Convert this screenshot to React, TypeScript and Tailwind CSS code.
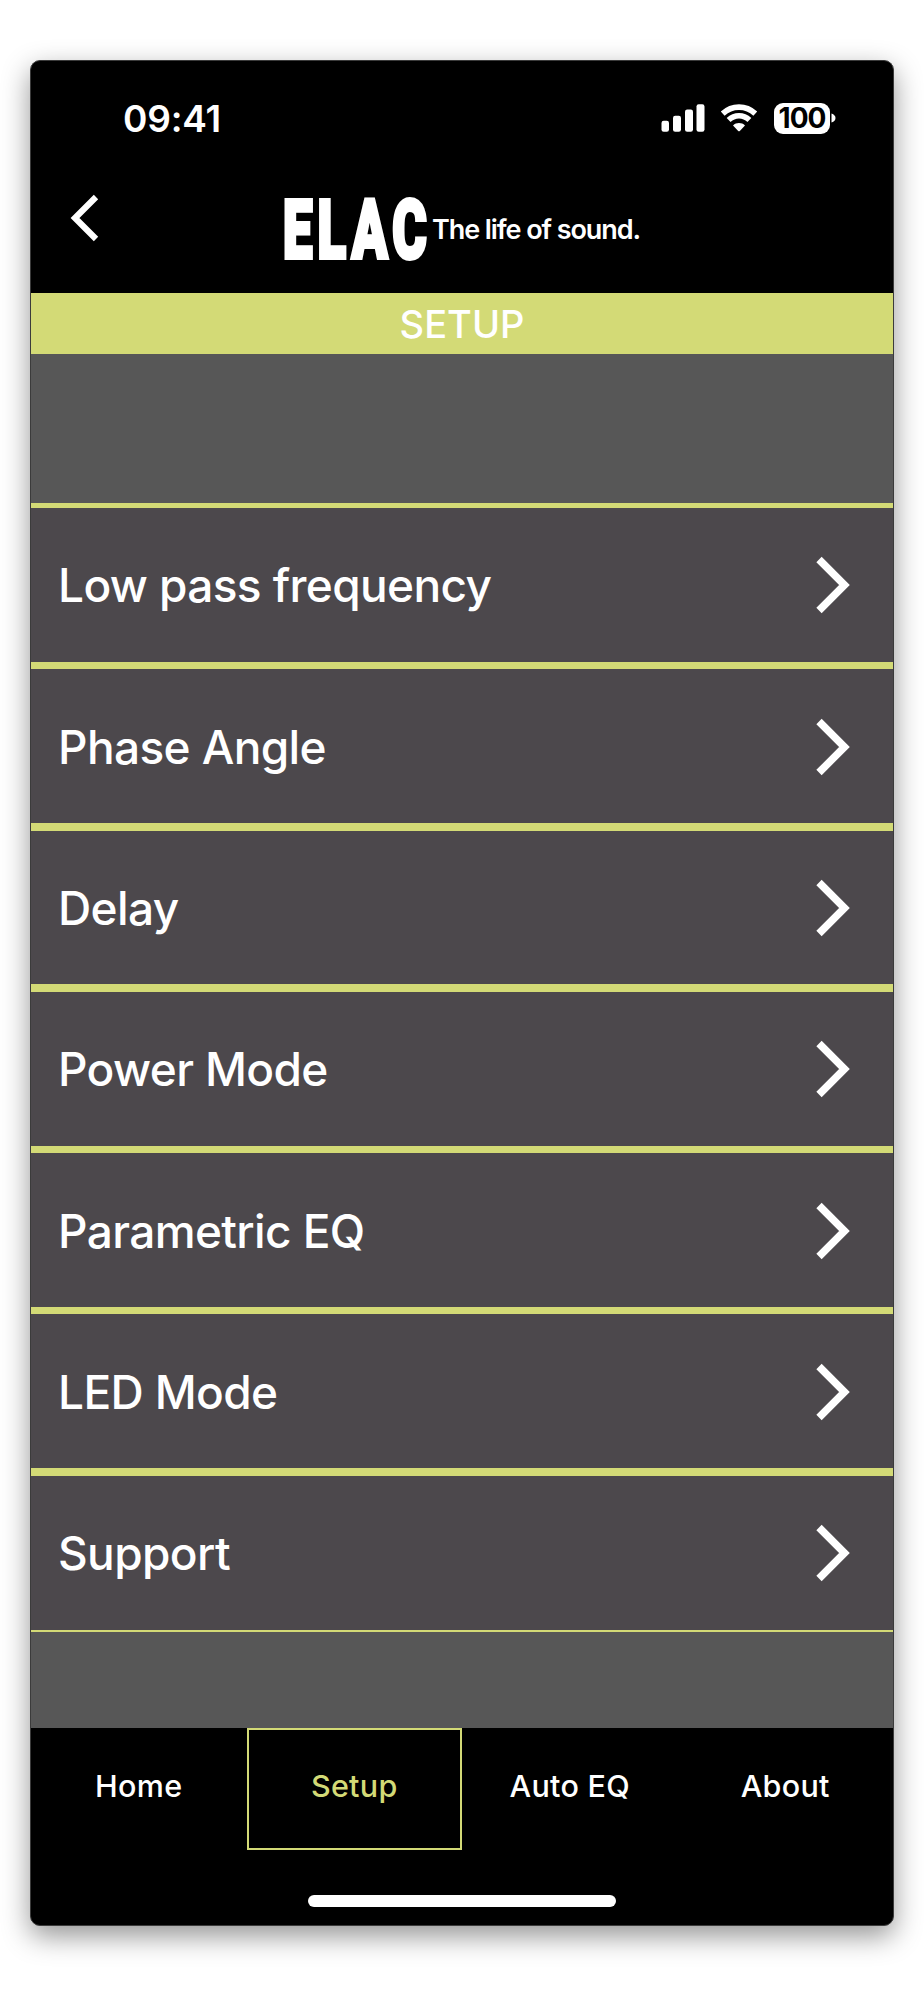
const menuItems = [
  "Low pass frequency",
  "Phase Angle",
  "Delay",
  "Power Mode",
  "Parametric EQ",
  "LED Mode",
  "Support",
];

const tabs = ["Home", "Setup", "Auto EQ", "About"];

function StatusBar() {
  return (
    <div className="flex h-[114px] shrink-0 items-center justify-between pr-[57px] pl-[92px]">
      <span className="text-[37px] leading-none font-semibold tracking-[-0.2px]">09:41</span>
      <div className="flex items-center">
        <svg width="44" height="28" viewBox="0 0 44 28" fill="white">
          <rect x="0.5" y="16.7" width="7.5" height="11" rx="2.2" />
          <rect x="12" y="11.7" width="8" height="16" rx="2.2" />
          <rect x="24" y="5.5" width="8" height="22.2" rx="2.2" />
          <rect x="35.5" y="0.3" width="8" height="27.4" rx="2.2" />
        </svg>
        <svg className="ml-[15px]" width="38" height="28" viewBox="0 0 38 28">
          <g fill="none" stroke="white" strokeWidth="5.6">
            <path d="M2.7 9.6 C12 0.9 26 0.9 35.3 9.6" />
            <path d="M8.6 16 C14.6 10.3 23.4 10.3 29.4 16" />
          </g>
          <path d="M13 21.5 C16.4 18.3 21.6 18.3 25 21.5 L19.8 26.9 Q19 27.6 18.2 26.9 Z" fill="white" />
        </svg>
        <div className="ml-[16px] flex h-[31px] w-[56px] items-center justify-center rounded-[9px] bg-white text-[28px] leading-none font-bold tracking-[-1px] text-black">
          100
        </div>
        <svg className="ml-[1px]" width="5" height="10" viewBox="0 0 5 10" fill="white">
          <path d="M0.5 0.5 Q4.5 2 4.5 5 Q4.5 8 0.5 9.5 Z" />
        </svg>
      </div>
    </div>
  );
}

function Header() {
  return (
    <header className="flex h-[118px] shrink-0 items-start">
      <button className="mt-[18px] ml-[38px]" aria-label="Back">
        <svg width="32" height="50" viewBox="0 0 32 50" fill="none" stroke="white" strokeWidth="6.2">
          <path d="M27 4 L6 25 L27 46" />
        </svg>
      </button>
      <div className="mt-[3px] ml-[182px] flex items-center">
        <svg
          className="overflow-visible"
          width="147"
          height="100"
          viewBox="0 0 229 100"
          preserveAspectRatio="none"
          fill="white"
          stroke="white"
          strokeWidth="4"
        >
          <text x="0" y="80" className="font-['Roboto'] text-[82px] font-black tracking-[8px]">
            ELAC
          </text>
        </svg>
        <span className="mt-[3px] ml-[2px] text-[27px] leading-none font-semibold tracking-[-1.08px] whitespace-nowrap">
          The life of sound.
        </span>
      </div>
    </header>
  );
}

function MenuRow({ label }: { label: string }) {
  return (
    <button className="flex h-[153.8px] w-full items-center justify-between bg-[#4c484c] pt-[1px] pr-[42px] pl-[27px] text-left">
      <span className="text-[46px] leading-none font-medium tracking-[-0.62px]">{label}</span>
      <svg width="36" height="58" viewBox="0 0 36 58" fill="none" stroke="white" strokeWidth="7.5">
        <path d="M4 3.5 L29.5 29 L4 54.5" />
      </svg>
    </button>
  );
}

export default function App() {
  return (
    <div className="h-[2000px] w-[924px] bg-white px-[30px] pt-[60px] font-['Inter',sans-serif] text-white">
      <div className="flex h-[1866px] w-[864px] flex-col overflow-hidden rounded-[10px] border border-[#3b3b3b] bg-black shadow-[0_10px_28px_rgba(0,0,0,0.42)]">
        <StatusBar />
        <Header />

        <div className="flex h-[61px] shrink-0 items-center justify-center bg-[#d3da76] text-[38px] leading-none font-medium">
          SETUP
        </div>

        <main className="h-[1374px] shrink-0 bg-[#575757] pt-[149px]">
          <div className="flex flex-col gap-[7.5px] bg-[#d3da76] pt-[5px] pb-[2px]">
            {menuItems.map((item) => (
              <MenuRow key={item} label={item} />
            ))}
          </div>
        </main>

        <nav className="grid h-[122px] shrink-0 grid-cols-4">
          {tabs.map((tab) => (
            <button
              key={tab}
              className={
                tab === "Setup"
                  ? "border-2 border-[#d3da76] pb-[6px] text-[30.5px] font-medium tracking-[0.3px] text-[#d3da76]"
                  : "border-2 border-transparent pb-[6px] text-[30.5px] font-medium tracking-[0.3px]"
              }
            >
              {tab}
            </button>
          ))}
        </nav>

        <div className="mx-auto mt-[45px] h-3 w-[308px] shrink-0 rounded-full bg-white" />
      </div>
    </div>
  );
}
